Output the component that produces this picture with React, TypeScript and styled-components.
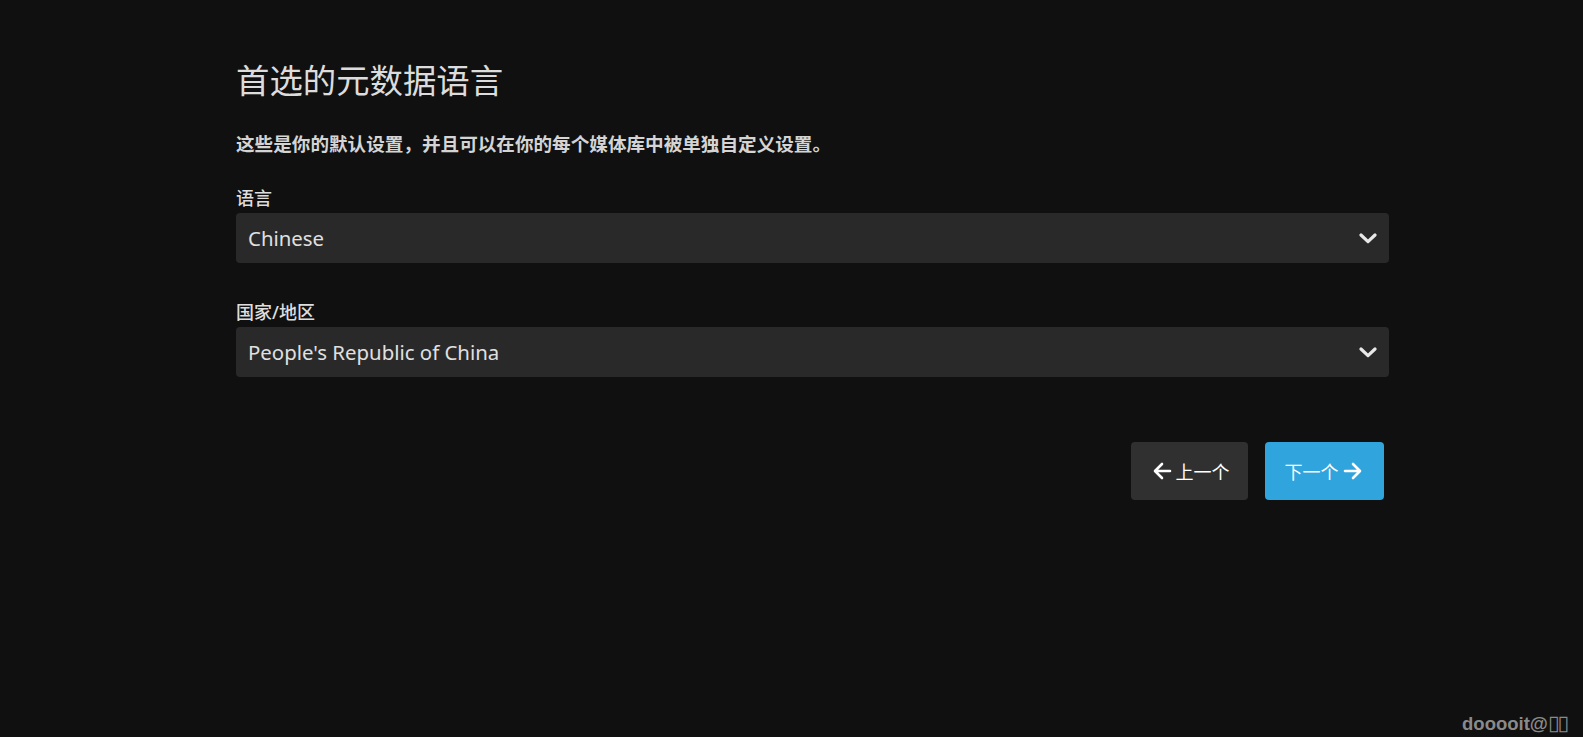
import React from "react";
import styled, { createGlobalStyle } from "styled-components";

const Global = createGlobalStyle`
  html, body {
    margin: 0;
    padding: 0;
    background: #101010;
  }
  body {
    font-family: "Noto Sans", "Noto Sans CJK SC", sans-serif;
    color: rgba(255, 255, 255, 0.87);
    width: 1583px;
    height: 737px;
    overflow: hidden;
  }
`;

const Page = styled.div`
  position: relative;
  width: 1583px;
  height: 737px;
  box-sizing: border-box;
  padding: 60px 0 0 236px;
`;

const Content = styled.div`
  width: 1153px;
  display: flex;
  flex-direction: column;
`;

const Title = styled.h1`
  margin: 0;
  font-size: 33.4px;
  line-height: 41px;
  font-weight: 400;
  color: #dcdcdc;
`;

const Subtitle = styled.p`
  margin: 29px 0 0;
  font-size: 18.6px;
  line-height: 28px;
  font-weight: 700;
  color: #d4d4d4;
`;

const Field = styled.div<{ $gap: number }>`
  margin-top: ${(p) => p.$gap}px;
  display: flex;
  flex-direction: column;
  gap: 2px;
`;

const Label = styled.label`
  font-size: 18px;
  line-height: 26px;
  font-weight: 500;
  color: #dedede;
`;

const SelectBox = styled.div`
  position: relative;
  height: 50px;
  box-sizing: border-box;
  padding: 0 40px 0 12px;
  background: #292929;
  border-radius: 4px;
  display: flex;
  align-items: center;
  font-size: 20.4px;
  color: #e0e0e0;
`;

const Chevron = styled.svg`
  position: absolute;
  right: 12px;
  top: 50%;
  margin-top: -5px;
  width: 18px;
  height: 11px;
`;

const Buttons = styled.div`
  margin-top: 65px;
  display: flex;
  justify-content: flex-end;
  gap: 17px;
  padding-right: 5px;
`;

const Button = styled.button<{ $primary?: boolean }>`
  height: 58px;
  box-sizing: border-box;
  padding: 0;
  width: ${(p) => (p.$primary ? "119px" : "117px")};
  border: 0;
  border-radius: 4px;
  background: ${(p) => (p.$primary ? "#30a4dd" : "#303030")};
  color: #fff;
  font-family: "Noto Sans", "Noto Sans CJK SC", sans-serif;
  font-size: 18px;
  display: flex;
  align-items: center;
  justify-content: center;
  gap: 2px;
`;

const Arrow = styled.svg`
  width: 24px;
  height: 24px;
`;

const Watermark = styled.div`
  position: absolute;
  right: 16px;
  bottom: 2px;
  font-family: "Liberation Sans", Arial, sans-serif;
  font-weight: 700;
  font-size: 18.5px;
  color: #8a8a8a;
  display: flex;
  align-items: baseline;
`;

const Tofu = styled.span`
  font-family: "DejaVu Sans", sans-serif;
  font-weight: 400;
  font-size: 21px;
  letter-spacing: -2px;
`;

const ChevronIcon = () => (
  <Chevron viewBox="0 0 18 11">
    <polyline
      points="2,2 9,8.6 16,2"
      fill="none"
      stroke="#e8e8e8"
      strokeWidth="3.2"
      strokeLinecap="round"
      strokeLinejoin="round"
    />
  </Chevron>
);

const BackArrow = () => (
  <Arrow viewBox="0 0 24 24">
    <path
      d="M20 12H5.5M12 5l-7 7 7 7"
      fill="none"
      stroke="currentColor"
      strokeWidth="2.6"
      strokeLinecap="round"
      strokeLinejoin="round"
    />
  </Arrow>
);

const ForwardArrow = () => (
  <Arrow viewBox="0 0 24 24">
    <path
      d="M4 12h14.5M12 5l7 7-7 7"
      fill="none"
      stroke="currentColor"
      strokeWidth="2.6"
      strokeLinecap="round"
      strokeLinejoin="round"
    />
  </Arrow>
);

const Select = ({ value }: { value: string }) => (
  <SelectBox>
    {value}
    <ChevronIcon />
  </SelectBox>
);

export default function App() {
  return (
    <>
      <Global />
      <Page>
        <Content>
          <Title>首选的元数据语言</Title>
          <Subtitle>这些是你的默认设置，并且可以在你的每个媒体库中被单独自定义设置。</Subtitle>
          <Field $gap={27}>
            <Label>语言</Label>
            <Select value="Chinese" />
          </Field>
          <Field $gap={36}>
            <Label>国家/地区</Label>
            <Select value="People's Republic of China" />
          </Field>
          <Buttons>
            <Button>
              <BackArrow />
              上一个
            </Button>
            <Button $primary>
              下一个
              <ForwardArrow />
            </Button>
          </Buttons>
        </Content>
        <Watermark>
          dooooit@<Tofu>▯▯</Tofu>
        </Watermark>
      </Page>
    </>
  );
}
